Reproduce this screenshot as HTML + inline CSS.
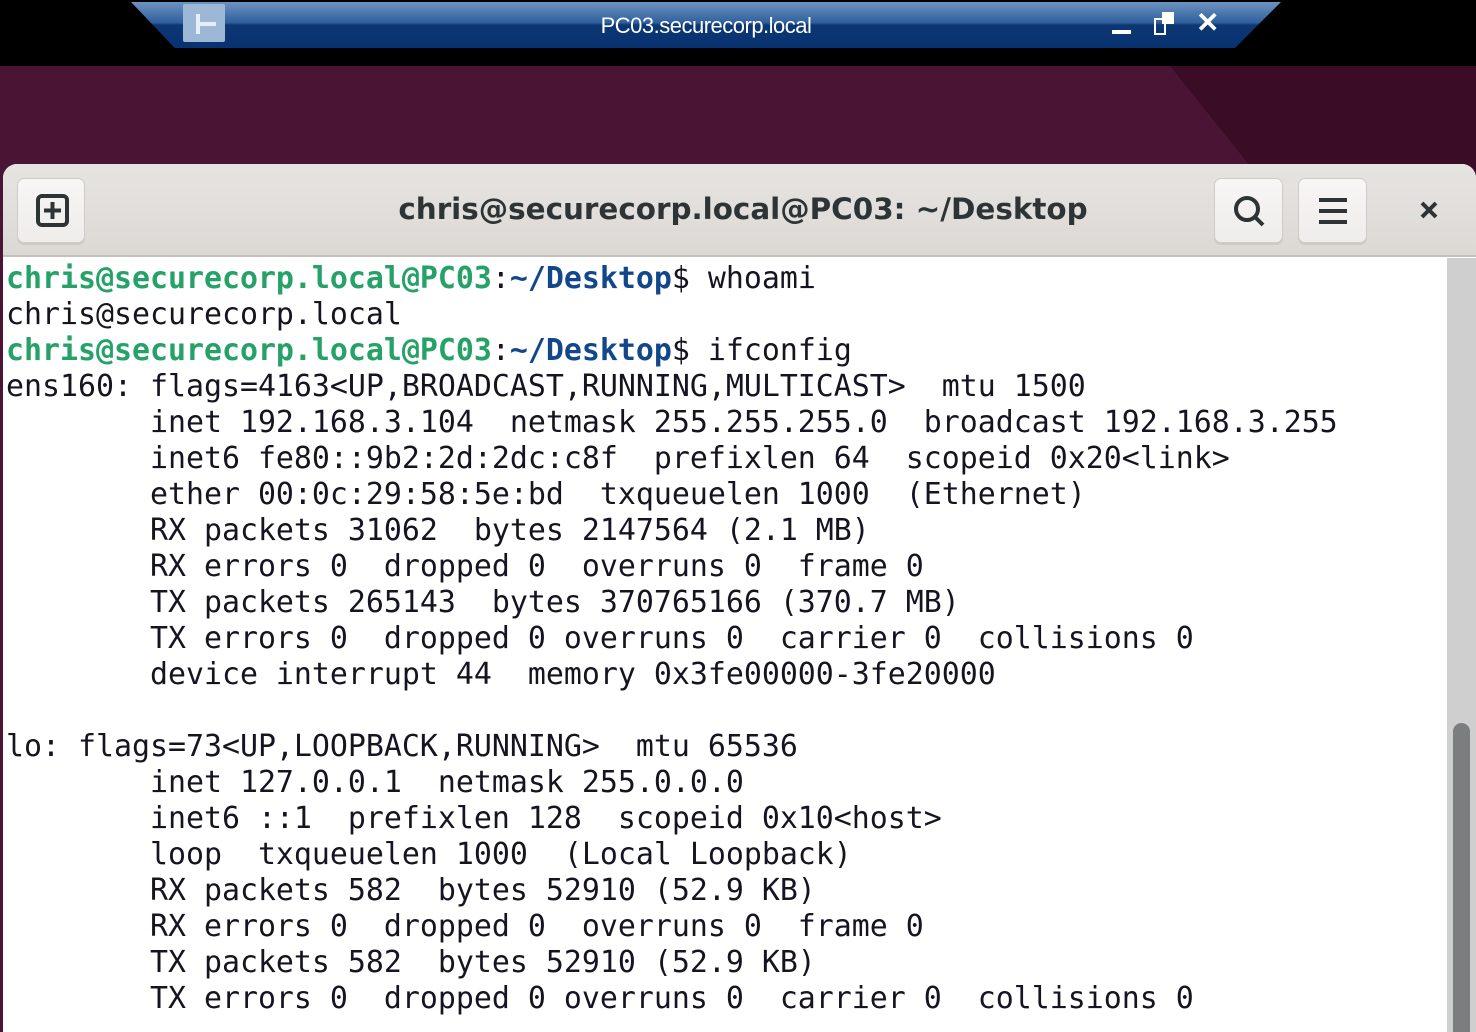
<!DOCTYPE html>
<html><head><meta charset="utf-8"><style>
*{margin:0;padding:0;box-sizing:border-box}
html,body{width:1476px;height:1032px;overflow:hidden}
body{background:#000;position:relative;font-family:"Liberation Sans",sans-serif}
.bg{position:absolute;left:0;top:66px;width:1476px;height:966px;background:#4a1535}
.bgd{position:absolute;left:1170px;top:66px;width:400px;height:200px;background:#3a0c26;clip-path:polygon(0 0,100% 0,100% 100%,40% 100%)}
.win{position:absolute;left:3px;top:164px;width:1473px;height:868px;background:#fff;border-radius:14px 14px 0 0;overflow:hidden}
.hdr{position:absolute;left:0;top:0;width:100%;height:93px;background:linear-gradient(#e6e4e1,#dcd9d5);border-bottom:2px solid #c4c0bb}
.btn{position:absolute;top:14px;height:65px;border-radius:7px;background:linear-gradient(#f7f6f5,#efedeb);border:1px solid #cfcbc6;box-shadow:0 2px 0 #cdc9c4}
.title{position:absolute;left:0;width:1480px;top:28px;text-align:center;font-weight:bold;font-size:29.4px;color:#2e3436;font-family:"DejaVu Sans",sans-serif}
.term{position:absolute;left:6px;top:261px;font-family:"DejaVu Sans Mono",monospace;font-size:29.9px;line-height:36px;color:#171421;white-space:pre}
.g{color:#26a269;font-weight:bold}.b{color:#12488b;font-weight:bold}
.sb{position:absolute;left:1447px;top:258px;width:29px;height:774px;background:#cfcfcf}
.th{position:absolute;left:1453px;top:723px;width:17px;height:320px;background:#7a7e7e;border-radius:9px}
.tb{position:absolute;left:131px;top:2px;width:1150px;height:46px;background:linear-gradient(#6d93c2 0%,#2f5f9c 45%,#0c3773 50%,#083270 100%);clip-path:polygon(0 0,100% 0,96% 100%,3.8% 100%)}
</style></head><body>
<div class="bg"></div><div class="bgd"></div>
<div class="tb"></div>
<div style="position:absolute;left:183px;top:4px;width:42px;height:38px;background:#9db7d6;border-radius:2px"></div>
<div style="position:absolute;left:196px;top:14px;width:4px;height:20px;background:#e8eef6"></div>
<div style="position:absolute;left:196px;top:22px;width:20px;height:4px;background:#e8eef6"></div>
<div style="position:absolute;left:0;width:1412px;top:13px;text-align:center;color:#fff;font-size:22px;letter-spacing:-0.5px">PC03.securecorp.local</div>
<div style="position:absolute;left:1112px;top:30px;width:19px;height:4px;background:#fff"></div>
<div style="position:absolute;left:1154px;top:18px;width:12px;height:17px;border:2px solid #fff"></div>
<div style="position:absolute;left:1162px;top:12px;width:12px;height:12px;background:#fff"></div>
<div style="position:absolute;left:1196px;top:6px;color:#fff;font-size:28px;font-weight:bold">✕</div>
<div class="win">
<div class="hdr">
<div class="btn" style="left:14px;width:68px"><svg width="68" height="65" viewBox="0 0 68 65"><rect x="20" y="17" width="29" height="29" rx="4" fill="none" stroke="#2e3436" stroke-width="4"/><path d="M34.5 23v17M26 31.5h17" stroke="#2e3436" stroke-width="4"/></svg></div>
<div class="title">chris@securecorp.local@PC03: ~/Desktop</div>
<div class="btn" style="left:1211px;width:69px"><svg width="69" height="65" viewBox="0 0 69 65"><circle cx="32" cy="30" r="11" fill="none" stroke="#2e3436" stroke-width="4"/><path d="M40 38l8 8" stroke="#2e3436" stroke-width="4"/></svg></div>
<div class="btn" style="left:1295px;width:69px"><svg width="69" height="65" viewBox="0 0 69 65"><path d="M20 21h28M20 32h28M20 43h28" stroke="#2e3436" stroke-width="4"/></svg></div>
<svg style="position:absolute;left:1416px;top:36px" width="20" height="20" viewBox="0 0 20 20"><path d="M3 3l14 14M17 3L3 17" stroke="#2e3436" stroke-width="4"/></svg>
</div>
</div>
<div class="term"><span class="g">chris@securecorp.local@PC03</span>:<span class="b">~/Desktop</span>$ whoami
chris@securecorp.local
<span class="g">chris@securecorp.local@PC03</span>:<span class="b">~/Desktop</span>$ ifconfig
ens160: flags=4163&lt;UP,BROADCAST,RUNNING,MULTICAST&gt;  mtu 1500
        inet 192.168.3.104  netmask 255.255.255.0  broadcast 192.168.3.255
        inet6 fe80::9b2:2d:2dc:c8f  prefixlen 64  scopeid 0x20&lt;link&gt;
        ether 00:0c:29:58:5e:bd  txqueuelen 1000  (Ethernet)
        RX packets 31062  bytes 2147564 (2.1 MB)
        RX errors 0  dropped 0  overruns 0  frame 0
        TX packets 265143  bytes 370765166 (370.7 MB)
        TX errors 0  dropped 0 overruns 0  carrier 0  collisions 0
        device interrupt 44  memory 0x3fe00000-3fe20000

lo: flags=73&lt;UP,LOOPBACK,RUNNING&gt;  mtu 65536
        inet 127.0.0.1  netmask 255.0.0.0
        inet6 ::1  prefixlen 128  scopeid 0x10&lt;host&gt;
        loop  txqueuelen 1000  (Local Loopback)
        RX packets 582  bytes 52910 (52.9 KB)
        RX errors 0  dropped 0  overruns 0  frame 0
        TX packets 582  bytes 52910 (52.9 KB)
        TX errors 0  dropped 0 overruns 0  carrier 0  collisions 0</div>
<div class="sb"></div><div class="th"></div>
</body></html>
